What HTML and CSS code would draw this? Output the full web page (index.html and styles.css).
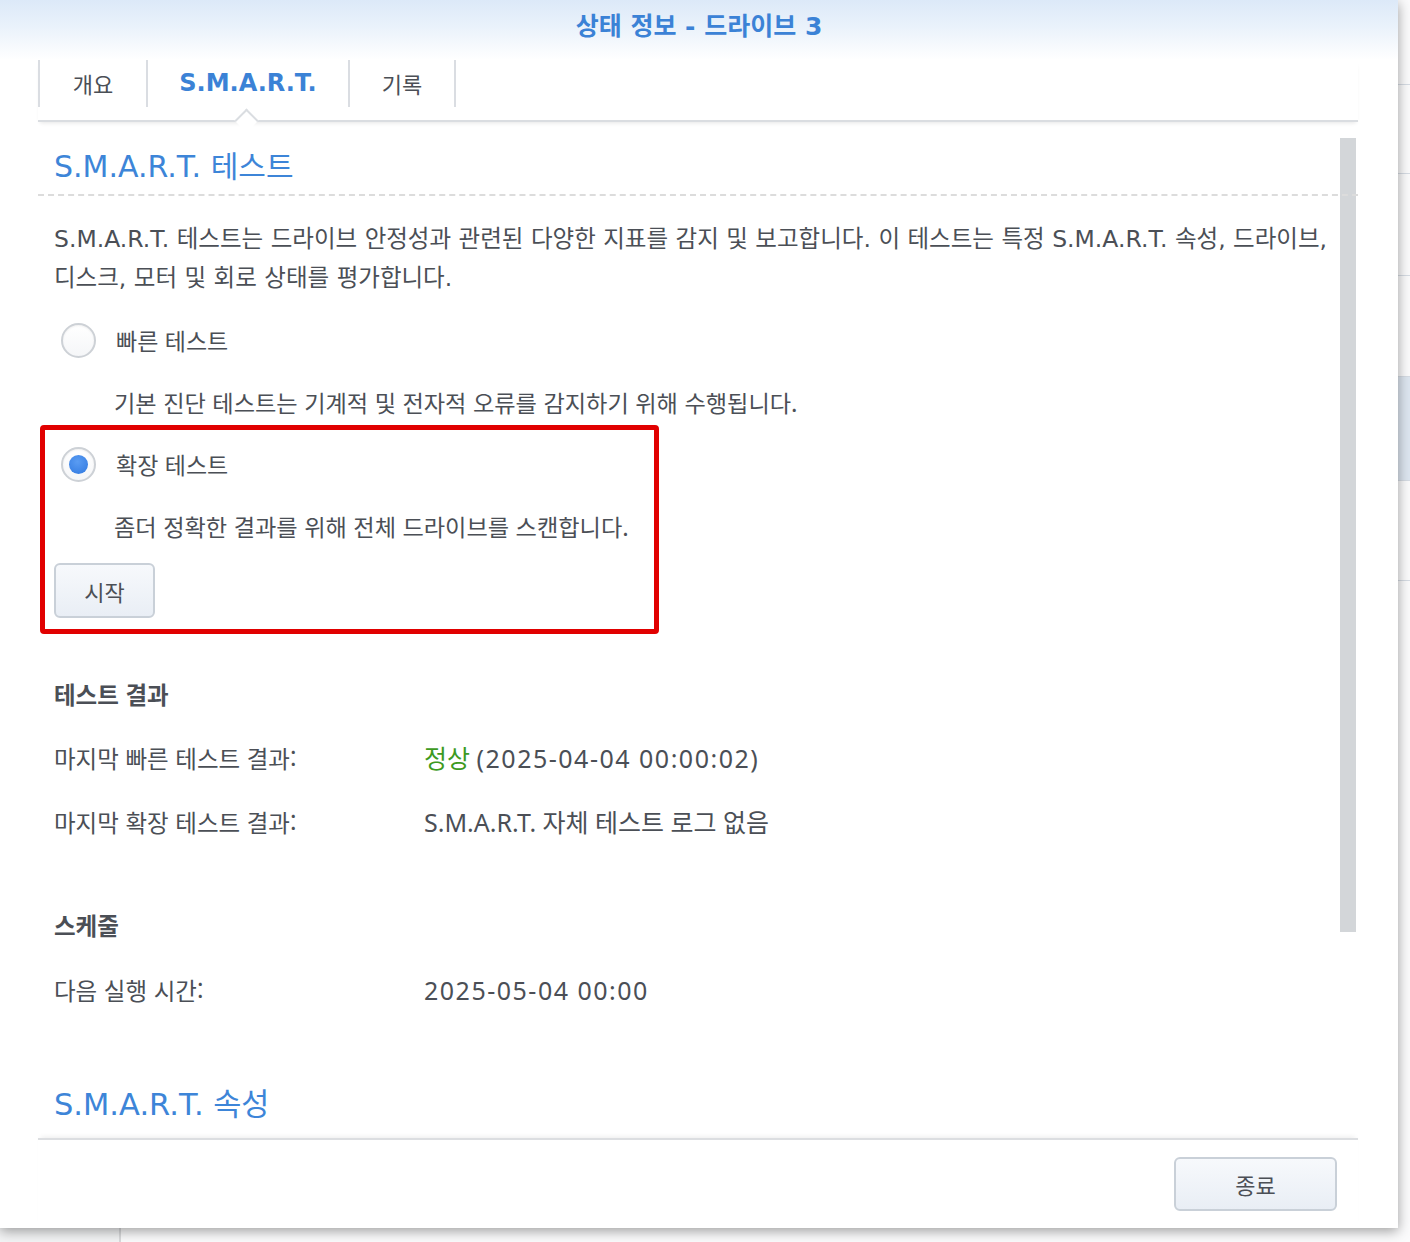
FILE: index.html
```html
<!DOCTYPE html>
<html lang="ko">
<head>
<meta charset="utf-8">
<title>상태 정보 - 드라이브 3</title>
<link rel="stylesheet" href="styles.css">
</head>
<body>
<div class="desk">
  <div class="desk-side"></div>
  <div class="desk-list">
    <div class="desk-row r1"></div>
    <div class="desk-row r2"></div>
    <div class="desk-row r3"></div>
    <div class="desk-row r4"></div>
    <div class="desk-row r5 hl"></div>
    <div class="desk-row r6"></div>
  </div>
</div>

<div class="dialog">
  <div class="dlg-header">
    <div class="dlg-title">상태 정보 - 드라이브 3</div>
  </div>

  <div class="tabbar">
    <div class="tab">개요</div>
    <div class="tab active">S.M.A.R.T.</div>
    <div class="tab">기록</div>
    <span class="notch"></span>
  </div>

  <div class="panel">
    <div class="panel-inner">
      <h2 class="sec-title dashed">S.M.A.R.T. 테스트</h2>
      <p class="intro">S.M.A.R.T. 테스트는 드라이브 안정성과 관련된 다양한 지표를 감지 및 보고합니다. 이 테스트는 특정 S.M.A.R.T. 속성, 드라이브,<br>디스크, 모터 및 회로 상태를 평가합니다.</p>

      <div class="radio-row first">
        <span class="radio"></span>
        <span class="radio-label">빠른 테스트</span>
      </div>
      <div class="desc">기본 진단 테스트는 기계적 및 전자적 오류를 감지하기 위해 수행됩니다.</div>

      <div class="highlight">
        <div class="radio-row">
          <span class="radio checked"></span>
          <span class="radio-label">확장 테스트</span>
        </div>
        <div class="desc">좀더 정확한 결과를 위해 전체 드라이브를 스캔합니다.</div>
        <button class="btn start">시작</button>
      </div>

      <h3 class="sub-title results">테스트 결과</h3>
      <div class="kv">
        <div class="k">마지막 빠른 테스트 결과:</div>
        <div class="v"><span class="ok">정상</span> <span class="num">(2025-04-04 00:00:02)</span></div>
      </div>
      <div class="kv">
        <div class="k">마지막 확장 테스트 결과:</div>
        <div class="v">S.M.A.R.T. 자체 테스트 로그 없음</div>
      </div>

      <h3 class="sub-title schedule">스케줄</h3>
      <div class="kv">
        <div class="k">다음 실행 시간:</div>
        <div class="v"><span class="num">2025-05-04 00:00</span></div>
      </div>

      <h2 class="sec-title attrs">S.M.A.R.T. 속성</h2>
    </div>
    <div class="scroll-thumb"></div>
  </div>

  <div class="footer">
    <button class="btn close">종료</button>
  </div>
</div>
</body>
</html>
```

FILE: styles.css
```css
* { box-sizing: border-box; }

html, body {
  margin: 0;
  padding: 0;
}

body {
  width: 1410px;
  height: 1242px;
  overflow: hidden;
  position: relative;
  background: #f4f5f6;
  font-family: "DejaVu Sans", "Noto Sans CJK KR", sans-serif;
  color: #4b4f56;
}

/* background application behind the dialog */
.desk {
  display: flex;
  height: 100%;
}
.desk-side {
  width: 121px;
  border-right: 2px solid #d9dadc;
  background: #f3f4f5;
}
.desk-list {
  flex: 1;
  display: flex;
  flex-direction: column;
  background: #fbfbfc;
}
.desk-row { border-bottom: 1px solid #d6dce4; }
.desk-row.r1 { height: 85px; }
.desk-row.r2 { height: 89px; }
.desk-row.r3 { height: 102px; }
.desk-row.r4 { height: 101px; }
.desk-row.r5 { height: 104px; background: #dde6f0; }
.desk-row.r6 { height: 100px; }

/* dialog window */
.dialog {
  position: absolute;
  left: 0;
  top: 0;
  width: 1398px;
  height: 1228px;
  background: #fff;
  box-shadow: 0 3px 12px rgba(0, 0, 0, 0.38);
  display: flex;
  flex-direction: column;
}

.dlg-header {
  height: 60px;
  background: linear-gradient(#dce9f8 0%, #eaf2fb 45%, #ffffff 100%);
  display: flex;
  justify-content: center;
  padding-top: 10px;
}
.dlg-title {
  font-family: "DejaVu Sans", "Noto Sans CJK KR", sans-serif;
  font-weight: bold;
  font-size: 25px;
  line-height: 34px;
  color: #3b82d6;
}

/* tabs */
.tabbar {
  position: relative;
  margin: 0 40px 0 38px;
  height: 62px;
  display: flex;
  align-items: flex-start;
  border-bottom: 2px solid #dadde1;
  box-shadow: 0 3px 4px -2px rgba(0, 0, 0, 0.10);
}
.tab {
  height: 47px;
  display: flex;
  align-items: center;
  justify-content: center;
  font-family: "Noto Sans CJK KR", sans-serif;
  font-size: 22px;
  color: #4b4f56;
  border-left: 2px solid #dadde2;
  width: 108px;
  padding-bottom: 2px;
}
.tab.active {
  width: 202px;
  font-family: "DejaVu Sans", "Noto Sans CJK KR", sans-serif;
  font-weight: bold;
  font-size: 24px;
  color: #3b82d6;
}
.tab:last-of-type {
  border-right: 2px solid #dadde2;
}
.notch {
  position: absolute;
  left: 200px;
  bottom: -9px;
  width: 17px;
  height: 17px;
  background: #fff;
  border-left: 2px solid #dadde1;
  border-top: 2px solid #dadde1;
  transform: rotate(45deg);
}

/* scroll panel */
.panel {
  position: relative;
  margin: 0 40px 0 38px;
  height: 1016px;
  overflow: hidden;
}
.panel-inner {
  padding-top: 25px;
}
.scroll-thumb {
  position: absolute;
  right: 2px;
  top: 16px;
  width: 16px;
  height: 794px;
  background: #d3d6d9;
}

.sec-title {
  margin: 0;
  padding: 0 16px;
  font-weight: normal;
  font-size: 30px;
  line-height: 40px;
  color: #3d85d8;
}
.sec-title.dashed {
  position: relative;
  z-index: 1;
  padding-bottom: 7px;
  border-bottom: 2px dashed #dcdcdc;
}
.sec-title.attrs {
  margin-top: 75px;
  font-size: 30.5px;
}

.intro {
  margin: 24px 0 0;
  padding: 0 16px;
  font-size: 23.5px;
  line-height: 39px;
  color: #4b4f56;
}

.radio-row {
  display: flex;
  align-items: center;
  height: 40px;
  padding-left: 23px;
  font-family: "Noto Sans CJK KR", sans-serif;
  font-size: 23px;
}
.radio-row.first { margin-top: 22px; }
.radio {
  width: 35px;
  height: 35px;
  border-radius: 50%;
  border: 2px solid #cdd1d6;
  background: linear-gradient(#ffffff, #f5f6f8);
  box-shadow: inset 0 1px 2px rgba(0, 0, 0, 0.06);
  display: flex;
  align-items: center;
  justify-content: center;
  flex: none;
}
.radio.checked::after {
  content: "";
  width: 19px;
  height: 19px;
  border-radius: 50%;
  background: radial-gradient(circle at 45% 35%, #5a9cf2, #2f78e0);
}
.radio-label {
  margin-left: 20px;
  color: #4b4f56;
}

.desc {
  margin-top: 22px;
  height: 40px;
  line-height: 40px;
  padding-left: 76px;
  font-family: "Noto Sans CJK KR", sans-serif;
  font-size: 23.2px;
  color: #4b4f56;
}

.highlight {
  margin: 3px 0 0 2px;
  width: 619px;
  border: 5px solid #e10000;
  border-radius: 4px;
  padding: 14px 0 11px 9px;
}
.highlight .radio-row { padding-left: 7px; }
.highlight .desc { padding-left: 60px; }

.btn {
  font-family: "Noto Sans CJK KR", sans-serif;
  font-size: 22px;
  color: #4b4f56;
  background: linear-gradient(#f7f9fc, #e9eef5);
  border: 2px solid #c9d0d8;
  border-radius: 6px;
  padding: 0;
  display: flex;
  align-items: center;
  justify-content: center;
}
.btn.start {
  margin-top: 17px;
  width: 101px;
  height: 55px;
}

.sub-title {
  margin: 0;
  padding: 0 16px;
  font-family: "Noto Sans CJK KR", sans-serif;
  font-weight: bold;
  font-size: 23.5px;
  line-height: 40px;
  color: #4b4f56;
}
.sub-title.results { margin-top: 40px; }
.sub-title.schedule { margin-top: 63px; }

.kv {
  display: flex;
  margin-top: 24px;
  padding: 0 16px;
  font-family: "Noto Sans CJK KR", sans-serif;
  font-size: 23.5px;
  line-height: 40px;
}
.sub-title + .kv { margin-top: 24px; }
.sub-title.schedule + .kv { margin-top: 25px; }
.k {
  width: 370px;
  flex: none;
  color: #4b4f56;
}
.v {
  font-family: "Noto Sans", "Noto Sans CJK KR", sans-serif;
  font-size: 25px;
  color: #4b4f56;
}
.num { letter-spacing: 1.5px; }
.ok { color: #3d9a1f; }

.footer {
  flex: 1;
  margin: 0 40px 0 38px;
  border-top: 2px solid #dcdee1;
  box-shadow: 0 -4px 5px -3px rgba(0, 0, 0, 0.08);
  display: flex;
  justify-content: flex-end;
  align-items: flex-start;
  padding: 17px 21px 0 0;
}
.btn.close {
  width: 163px;
  height: 54px;
}
```
